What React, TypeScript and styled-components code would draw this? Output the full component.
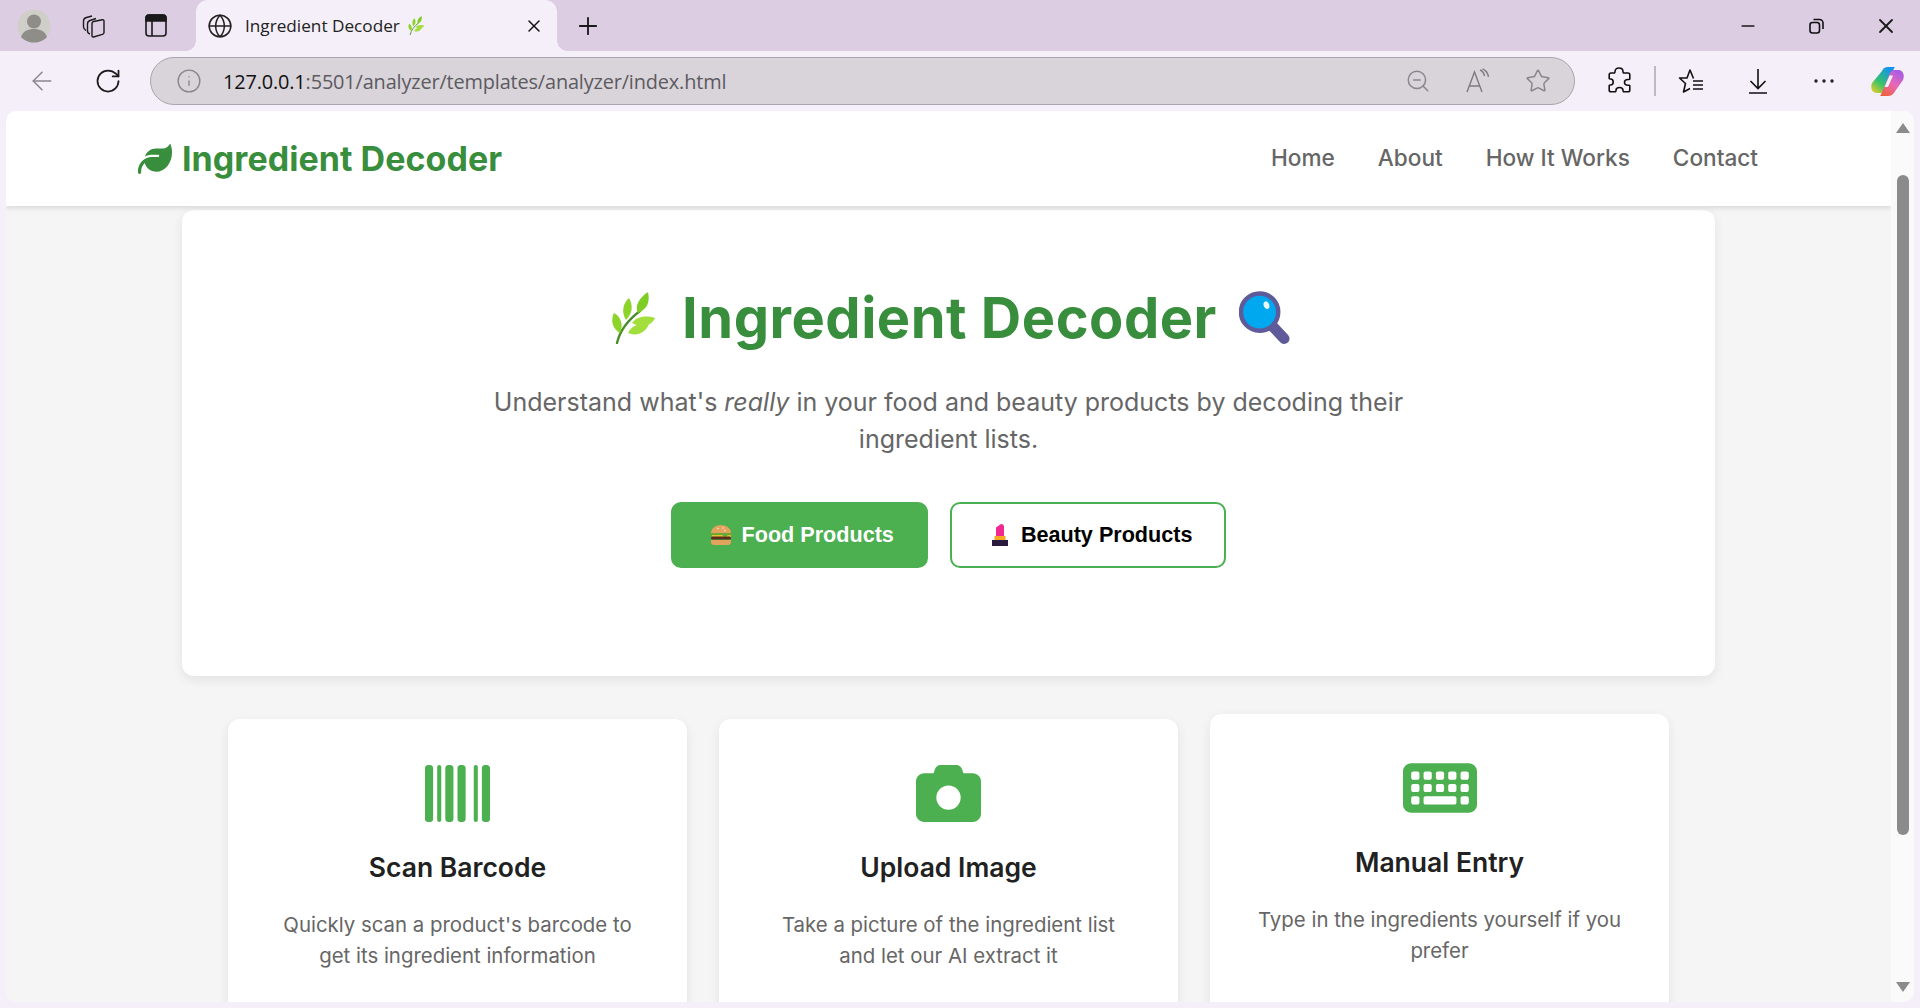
import React from "react";
import styled, { createGlobalStyle } from "styled-components";
import { ArrowLeft, Globe, Info, Minus, Plus, RotateCw, Star, X, ZoomOut } from "lucide-react";
import { FaBarcode, FaCamera, FaKeyboard, FaLeaf } from "react-icons/fa6";

const GlobalStyle = createGlobalStyle`
  html, body {
    margin: 0;
    height: 100%;
    overflow: hidden;
  }
  body {
    font-family: "Inter", "Liberation Sans", sans-serif;
    background: #f4eff8;
  }
`;

const Frame = styled.div`
  display: flex;
  flex-direction: column;
  height: 1008px;
  width: 1920px;
  overflow: hidden;
`;

/* Browser chrome */
const TabStrip = styled.div`
  display: flex;
  align-items: stretch;
  height: 51px;
  padding-left: 3px;
  background: #dccde3;
  flex-shrink: 0;
`;

const Slot = styled.div<{ $w?: number }>`
  display: flex;
  align-items: center;
  justify-content: center;
  width: ${({ $w }) => $w ?? 61}px;
  flex-shrink: 0;
  color: #1a1a1a;
`;

const ActiveTab = styled.div`
  position: relative;
  display: flex;
  align-items: center;
  width: 361px;
  margin-left: 8px;
  padding: 0 13px 0 11px;
  box-sizing: border-box;
  background: #f4eff8;
  border-radius: 12px 12px 0 0;
  font-family: "Open Sans", "Noto Sans", sans-serif;
  font-size: 17.2px;
  color: #222;

  &::before,
  &::after {
    content: "";
    position: absolute;
    bottom: 0;
    width: 10px;
    height: 10px;
  }
  &::before {
    left: -10px;
    background: radial-gradient(circle at 0 0, #dccde3 9.5px, #f4eff8 10px);
  }
  &::after {
    right: -10px;
    background: radial-gradient(circle at 100% 0, #dccde3 9.5px, #f4eff8 10px);
  }
`;

const TabTitle = styled.span`
  margin-left: 12px;
  white-space: nowrap;
`;

const TabHerb = styled.span`
  display: flex;
  margin-left: 8px;
`;

const TabClose = styled.span`
  display: flex;
  margin-left: auto;
  color: #111;
`;

const StripSpacer = styled.div`
  flex: 1;
`;

const Toolbar = styled.div`
  display: flex;
  align-items: center;
  height: 60px;
  padding-left: 8px;
  flex-shrink: 0;
`;

const ToolbarButton = styled(Slot)<{ $muted?: boolean }>`
  height: 48px;
  color: ${({ $muted }) => ($muted ? "#8a8590" : "#1a1a1a")};
`;

const AddressBar = styled.div`
  display: flex;
  align-items: center;
  width: 1425px;
  height: 48px;
  margin: 0 11px 0 10px;
  padding: 0 6px 0 25px;
  box-sizing: border-box;
  border: 1.5px solid #aaa6ae;
  border-radius: 24px;
  background: #d8d4da;
`;

const Url = styled.div`
  margin-left: 21px;
  flex: 1;
  font-family: "Open Sans", "Noto Sans", sans-serif;
  font-size: 19.9px;
  letter-spacing: -0.15px;
  color: #5d5a60;
`;

const UrlHost = styled.span`
  color: #111;
`;

const Divider = styled.div`
  width: 2px;
  height: 30px;
  margin: 0 2px;
  background: #bdb9c1;
  flex-shrink: 0;
`;

/* Page viewport */
const Viewport = styled.div`
  display: flex;
  flex: 1;
  min-height: 0;
  margin: 0 6px 6px 6px;
  overflow: hidden;
  background: #f5f5f5;
  border-radius: 10px;
`;

const Page = styled.div`
  flex: 1;
  min-width: 0;
  overflow: hidden;
`;

const ScrollRail = styled.div`
  display: flex;
  flex-direction: column;
  align-items: center;
  width: 23px;
  padding: 12px 0 10px;
  box-sizing: border-box;
  background: #fafafa;
  flex-shrink: 0;
`;

const ScrollThumb = styled.div`
  width: 12px;
  height: 660px;
  margin: 42px 0 auto;
  border-radius: 6px;
  background: #8b8b8b;
`;

const Arrow = styled.div<{ $down?: boolean }>`
  width: 0;
  height: 0;
  border-left: 7px solid transparent;
  border-right: 7px solid transparent;
  ${({ $down }) =>
    $down ? "border-top: 10px solid #8b8b8b;" : "border-bottom: 10px solid #8b8b8b;"}
`;

const Navbar = styled.nav`
  position: relative;
  display: flex;
  align-items: center;
  justify-content: space-between;
  height: 95px;
  padding: 0 133px 0 132px;
  background: #fff;
  box-shadow: 0 2px 5px rgba(0, 0, 0, 0.12);
`;

const Logo = styled.div`
  display: flex;
  align-items: center;
  gap: 10px;
  font-size: 34px;
  font-weight: 700;
  letter-spacing: 0.05px;
  color: #388e3c;
`;

const NavLinks = styled.div`
  display: flex;
  gap: 43px;
  padding-bottom: 3px;
`;

const NavLink = styled.a`
  font-size: 22.6px;
  font-weight: 500;
  color: #666;
  text-decoration: none;
`;

const Hero = styled.section`
  height: 466px;
  width: 1533px;
  margin: 4px auto 0;
  padding-top: 72px;
  box-sizing: border-box;
  background: #fff;
  border-radius: 12px;
  box-shadow: 0 4px 12px rgba(0, 0, 0, 0.08);
  text-align: center;
`;

const HeroTitle = styled.h1`
  display: flex;
  align-items: center;
  justify-content: center;
  gap: 22px;
  margin: 0;
  padding-left: 6px;
  height: 72px;
  font-size: 56px;
  font-weight: 700;
  letter-spacing: 0.5px;
  color: #388e3c;
`;

const HeroHerb = styled.span`
  display: flex;
  margin-right: 5px;
`;

const HeroText = styled.p`
  width: 960px;
  margin: 30px auto 0;
  font-size: 25px;
  line-height: 37px;
  color: #666;

  em {
    font-style: italic;
  }
`;

const ButtonRow = styled.div`
  display: flex;
  justify-content: center;
  gap: 22px;
  margin-top: 44px;
`;

const ModeButton = styled.button<{ $primary?: boolean }>`
  display: flex;
  align-items: center;
  justify-content: center;
  gap: 10px;
  height: 66px;
  padding: 0 32px 0 37px;
  border: 2px solid #4caf50;
  border-radius: 10px;
  background: ${({ $primary }) => ($primary ? "#4caf50" : "#fff")};
  color: ${({ $primary }) => ($primary ? "#fff" : "#000")};
  font-family: "Liberation Sans", Arial, sans-serif;
  font-size: 21.6px;
  font-weight: 700;
`;

const CardGrid = styled.div`
  display: flex;
  justify-content: center;
  gap: 32px;
  margin-top: 43px;
`;

const MethodCard = styled.article<{ $lifted?: boolean }>`
  width: 459px;
  height: 340px;
  padding: 42px 46px 0;
  box-sizing: border-box;
  background: #fff;
  border-radius: 12px;
  box-shadow: 0 4px 12px rgba(0, 0, 0, 0.08);
  text-align: center;
  transform: ${({ $lifted }) => ($lifted ? "translateY(-5px)" : "none")};
`;

const CardIcon = styled.div`
  display: flex;
  align-items: center;
  justify-content: center;
  height: 64px;
  color: #4caf50;
`;

const CardTitle = styled.h3`
  margin: 24px 0 0;
  font-size: 26.5px;
  line-height: 36px;
  font-weight: 600;
  color: #212121;
`;

const CardText = styled.p`
  margin: 24px 0 0;
  font-size: 20.4px;
  line-height: 31px;
  color: #666;
`;

const Avatar = () => (
  <svg width="34" height="34" viewBox="0 0 34 34">
    <circle cx="17" cy="17" r="16.5" fill="#cfcec8" />
    <circle cx="17" cy="12.5" r="7" fill="#8f8d88" />
    <path d="M4 28c2-6 7-8 13-8s11 2 13 8c-3 3.500-8 5.500-13 5.500S7 31.500 4 28z" fill="#8f8d88" />
  </svg>
);

const WorkspacesIcon = () => (
  <svg width="26" height="26" viewBox="0 0 26 26" fill="none" stroke="#1a1a1a" strokeWidth="1.4">
    <path d="M5 17.500c-1.500-1-2.500-2-2.500-3.500V8c0-2 1-3 3-3.500L11 3" />
    <path d="M9 21c-1.500-.5-2.500-1.500-2.500-3v-7c0-2 1-3 2.500-3.500L15 5.500" />
    <path d="M11 10.500c0-1 .5-1.500 1.500-2l9-1.800c1-.2 1.500.3 1.500 1.300v11.500c0 1-.5 1.500-1.500 1.800L12.500 24c-1 .2-1.500-.3-1.500-1.300z" />
  </svg>
);

const VerticalTabsIcon = () => (
  <svg width="22" height="23" viewBox="0 0 22 23" fill="none" stroke="#1a1a1a" strokeWidth="1.6">
    <rect x="1" y="1" width="20" height="21" rx="3" />
    <path d="M1 4a3 3 0 0 1 3-3h14a3 3 0 0 1 3 3v3H1z" fill="#1a1a1a" />
    <path d="M7 7v15" />
  </svg>
);

const RestoreIcon = () => (
  <svg width="15" height="16" viewBox="0 0 15 16" fill="none" stroke="#111" strokeWidth="1.6">
    <rect x="1" y="4.500" width="9.500" height="10.500" rx="2.500" />
    <path d="M4.500 1.500h6a3.500 3.500 0 0 1 3.500 3.500v6" />
  </svg>
);

const ReadAloudIcon = () => (
  <svg width="26" height="26" viewBox="0 0 26 26" fill="none" stroke="#7c797f" strokeWidth="1.4">
    <path d="M2 24L9.500 4 17 24M4.500 18h10" />
    <path d="M15 2c2.500 1 4 3 4.500 6M17.500 .8c3.500 1.500 5.500 4 6 8" />
  </svg>
);

const ExtensionIcon = () => (
  <svg width="24" height="28" viewBox="0 0 24 28" fill="none" stroke="#111" strokeWidth="1.6" strokeLinejoin="round">
    <path d="M8 4.500c0-2 1.500-3.500 4-3.500s4 1.500 4 3.500c0 .8 0 1.200.5 1.500H21c1 0 1.800.8 1.800 1.800v4.200c-.2.800-1 .5-1.800.5-2 0-3.500 1-3.500 2.800s1.500 3 3.500 3c.8 0 1.600-.3 1.800.5v4.200c0 1-.8 1.800-1.800 1.800h-4.500c-.5-.2-.5-.8-.5-1.500 0-1.700-1.500-2.800-3.500-2.800s-3.500 1.100-3.500 2.800c0 .7 0 1.300-.5 1.500H4c-1 0-1.800-.8-1.800-1.800v-4.500c.2-.5.800-.5 1.300-.5 1.600 0 2.700-1.300 2.700-3s-1.100-3-2.700-3c-.5 0-1.100 0-1.300-.5V7.800C2.200 6.800 3 6 4 6h3.500c.5-.3.500-.7.500-1.500z" />
  </svg>
);

const FavoritesIcon = () => (
  <svg width="26" height="26" viewBox="0 0 26 26" fill="none" stroke="#111" strokeWidth="1.6" strokeLinejoin="round">
    <path d="M15.500 10.500L12 2 9 10H1.500l6 5.500L5.500 24l6.500-3.500" />
    <path d="M15 13h10M15 17h10M15 21h10" />
  </svg>
);

const DownloadIcon = () => (
  <svg width="20" height="26" viewBox="0 0 20 26" fill="none" stroke="#111" strokeWidth="1.6">
    <path d="M10 1v19M2.500 13l7.500 7.500 7.500-7.500M1 25h18" />
  </svg>
);

const DotsIcon = () => (
  <svg width="20" height="4" viewBox="0 0 20 4" fill="#222">
    <circle cx="2" cy="2" r="1.700" />
    <circle cx="10" cy="2" r="1.700" />
    <circle cx="18" cy="2" r="1.700" />
  </svg>
);

const CopilotIcon = () => (
  <svg width="33" height="31" viewBox="0 0 33 31">
    <defs>
      <linearGradient id="copA" x1="0" y1="1" x2="0.7" y2="0">
        <stop offset="0" stopColor="#f5d020" />
        <stop offset="0.45" stopColor="#35c26b" />
        <stop offset="1" stopColor="#1392ef" />
      </linearGradient>
      <linearGradient id="copB" x1="0.2" y1="1" x2="0.8" y2="0">
        <stop offset="0" stopColor="#f0603c" />
        <stop offset="0.5" stopColor="#e868b8" />
        <stop offset="1" stopColor="#a35be8" />
      </linearGradient>
    </defs>
    <path d="M24 1H17c-3 0-5 1.500-6 4L1 17c-2 5 0 10 5 10h4c2 0 3-1 4-3l8-19c.5-1.500 1-3 2-4z" fill="url(#copA)" />
    <path d="M9 30h8c3 0 5-1.500 6.500-4L32 14c2-5 0-10-5-10h-4c-2 0-3 1-4 3l-8 19c-.5 1.500-1 3-2 4z" fill="url(#copB)" />
    <path d="M18.500 9.500h3.500l-5 11.500h-3.500z" fill="#f4eff8" />
  </svg>
);

const HerbIcon = ({ size }: { size: number }) => (
  <svg width={(size * 44) / 52} height={size} viewBox="0 0 44 52">
    <path d="M6 51C9 38 17 28 29 19" fill="none" stroke="#4b8f29" strokeWidth="2.400" strokeLinecap="round" />
    <path d="M27 21C23 14 29 5 37 0c2 9 0 17-10 21z" fill="#7fce26" />
    <path d="M15 28C10 20 12 11 18 6c4 7 4 15-3 22z" fill="#8cd42a" />
    <path d="M9 41C2 37-1 29 3 21c6 3 10 11 6 20z" fill="#8cd42a" />
    <path d="M21 31c4-6 13-8 23-5-3 8-14 10-23 5z" fill="#a2de3c" />
    <path d="M17 41c3-7 12-11 21-9-3 8-12 13-21 9z" fill="#a2de3c" />
  </svg>
);

const MagnifierIcon = () => (
  <svg width="53" height="54" viewBox="0 0 54 54">
    <path d="M32 33l14 15" stroke="#5f5a99" strokeWidth="11" strokeLinecap="round" />
    <circle cx="21" cy="21" r="19" fill="#00a8ef" stroke="#5f5a99" strokeWidth="4.500" />
    <ellipse cx="28" cy="14" rx="2.800" ry="4" fill="#e8f8ff" transform="rotate(-20 28 14)" />
  </svg>
);

const BurgerIcon = () => (
  <svg width="22" height="20" viewBox="0 0 22 20">
    <path d="M1 8c0-5 5-8 10-8s10 3 10 8z" fill="#e2a35c" />
    <circle cx="8" cy="3.500" r=".8" fill="#fbe6c8" />
    <circle cx="13" cy="3" r=".8" fill="#fbe6c8" />
    <circle cx="15" cy="5.500" r=".8" fill="#fbe6c8" />
    <path d="M0 8h22v2.500H0z" fill="#6aa83a" />
    <path d="M2 10h10l3 2 3-2h3v2H2z" fill="#e8c12e" />
    <rect x="1" y="11.500" width="20" height="3" rx="1.500" fill="#5d2e1b" />
    <path d="M1 15h20v2c0 2-1 3-3 3H4c-2 0-3-1-3-3z" fill="#e2a35c" />
  </svg>
);

const LipstickIcon = () => (
  <svg width="22" height="22" viewBox="-3 0 22 22">
    <path d="M4 12V3.500L9 0c2 0 3 1 3 3v9z" fill="#f0288f" />
    <rect x="2.500" y="12" width="11" height="4" fill="#f5a623" />
    <rect x="0" y="16" width="16" height="6" fill="#2a1a40" />
  </svg>
);

const navItems = ["Home", "About", "How It Works", "Contact"];

const methods = [
  {
    title: "Scan Barcode",
    text: "Quickly scan a product's barcode to get its ingredient information",
    icon: <FaBarcode size={65} />,
  },
  {
    title: "Upload Image",
    text: "Take a picture of the ingredient list and let our AI extract it",
    icon: <FaCamera size={65} />,
  },
  {
    title: "Manual Entry",
    text: "Type in the ingredients yourself if you prefer",
    icon: <FaKeyboard size={74} />,
    lifted: true,
  },
];

export default function App() {
  return (
    <Frame>
      <GlobalStyle />
      <TabStrip>
        <Slot><Avatar /></Slot>
        <Slot $w={60}><WorkspacesIcon /></Slot>
        <Slot $w={64}><VerticalTabsIcon /></Slot>
        <ActiveTab>
          <Globe size={26} strokeWidth={1.4} />
          <TabTitle>Ingredient Decoder</TabTitle>
          <TabHerb><HerbIcon size={19} /></TabHerb>
          <TabClose><X size={20} strokeWidth={1.8} /></TabClose>
        </ActiveTab>
        <Slot $w={62}><Plus size={28} strokeWidth={1.6} /></Slot>
        <StripSpacer />
        <Slot $w={69}><Minus size={20} strokeWidth={2} /></Slot>
        <Slot $w={69}><RestoreIcon /></Slot>
        <Slot $w={69}><X size={24} strokeWidth={1.8} /></Slot>
      </TabStrip>

      <Toolbar>
        <ToolbarButton $w={67} $muted><ArrowLeft size={30} strokeWidth={1.2} /></ToolbarButton>
        <ToolbarButton $w={65}><RotateCw size={28} strokeWidth={1.5} /></ToolbarButton>
        <AddressBar>
          <ToolbarButton $w={26} $muted><Info size={26} strokeWidth={1.3} /></ToolbarButton>
          <Url>
            <UrlHost>127.0.0.1</UrlHost>:5501/analyzer/templates/analyzer/index.html
          </Url>
          <ToolbarButton $w={60} $muted><ZoomOut size={26} strokeWidth={1.4} /></ToolbarButton>
          <ToolbarButton $w={60} $muted><ReadAloudIcon /></ToolbarButton>
          <ToolbarButton $w={60} $muted><Star size={26} strokeWidth={1.4} /></ToolbarButton>
        </AddressBar>
        <ToolbarButton $w={66}><ExtensionIcon /></ToolbarButton>
        <Divider />
        <ToolbarButton $w={66}><FavoritesIcon /></ToolbarButton>
        <ToolbarButton $w={67}><DownloadIcon /></ToolbarButton>
        <ToolbarButton $w={66}><DotsIcon /></ToolbarButton>
        <ToolbarButton $w={60}><CopilotIcon /></ToolbarButton>
      </Toolbar>

      <Viewport>
        <Page>
          <Navbar>
            <Logo>
              <FaLeaf size={34} />
              Ingredient Decoder
            </Logo>
            <NavLinks>
              {navItems.map((item) => (
                <NavLink key={item}>{item}</NavLink>
              ))}
            </NavLinks>
          </Navbar>

          <Hero>
            <HeroTitle>
              <HeroHerb><HerbIcon size={52} /></HeroHerb>
              <span>Ingredient Decoder</span>
              <MagnifierIcon />
            </HeroTitle>
            <HeroText>
              Understand what's <em>really</em> in your food and beauty products by decoding their
              ingredient lists.
            </HeroText>
            <ButtonRow>
              <ModeButton $primary>
                <BurgerIcon />
                Food Products
              </ModeButton>
              <ModeButton>
                <LipstickIcon />
                Beauty Products
              </ModeButton>
            </ButtonRow>
          </Hero>

          <CardGrid>
            {methods.map((method) => (
              <MethodCard key={method.title} $lifted={method.lifted}>
                <CardIcon>{method.icon}</CardIcon>
                <CardTitle>{method.title}</CardTitle>
                <CardText>{method.text}</CardText>
              </MethodCard>
            ))}
          </CardGrid>
        </Page>
        <ScrollRail>
          <Arrow />
          <ScrollThumb />
          <Arrow $down />
        </ScrollRail>
      </Viewport>
    </Frame>
  );
}
